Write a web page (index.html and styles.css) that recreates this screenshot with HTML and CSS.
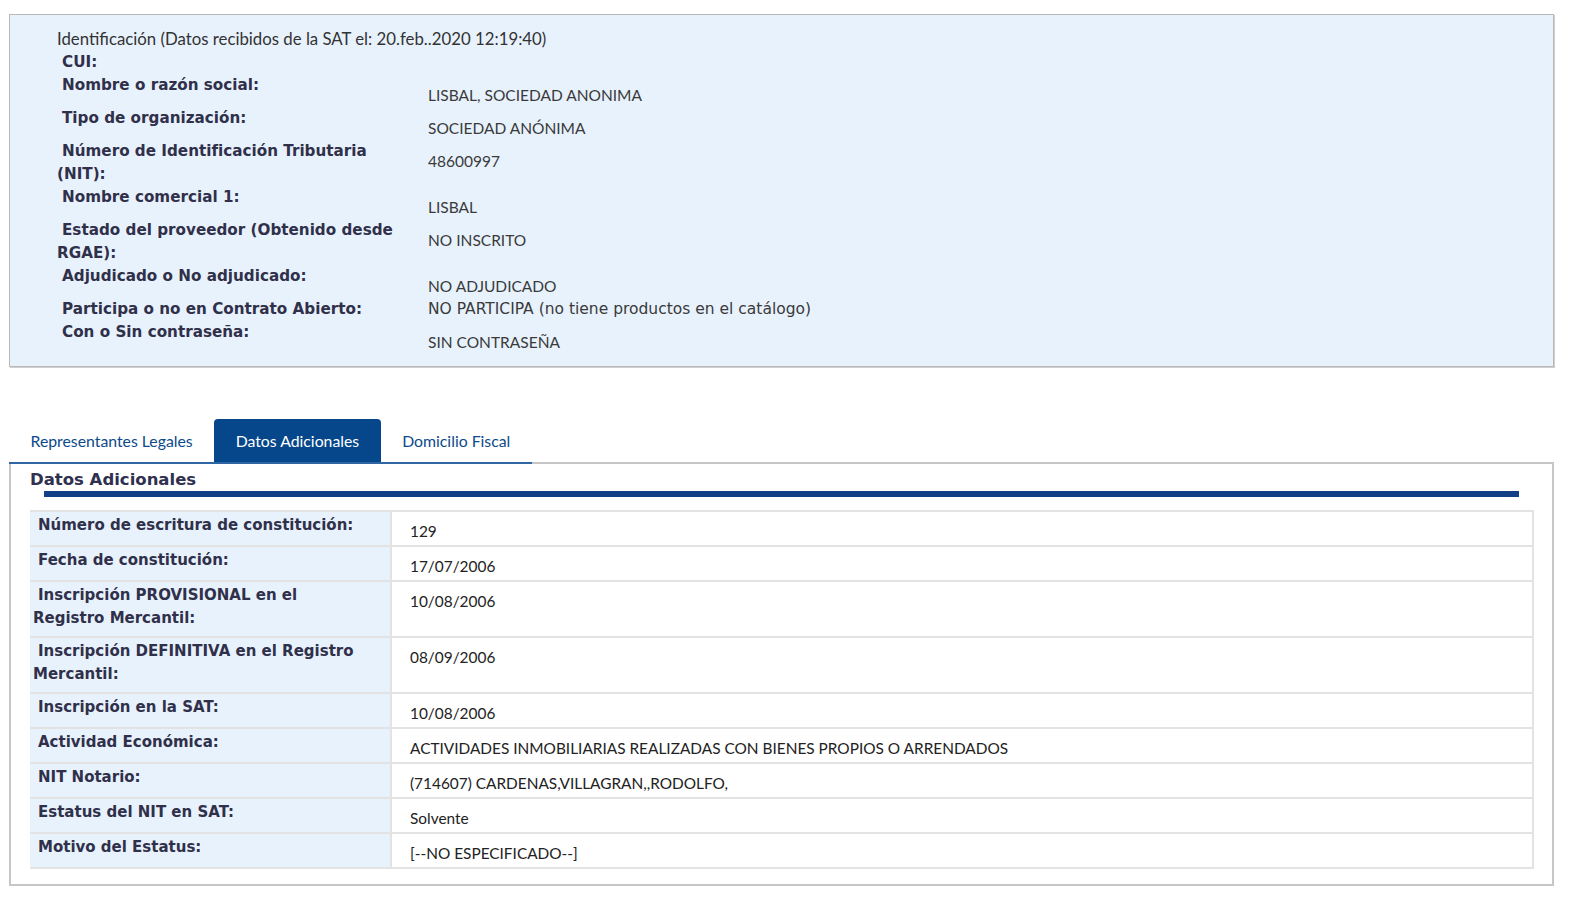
FILE: index.html
```html
<!DOCTYPE html>
<html lang="es">
<head>
<meta charset="utf-8">
<title>Identificación</title>
<link rel="stylesheet" href="styles.css">
</head>
<body>
<div class="page">
  <section class="ident">
    <div class="ident-title">Identificación (Datos recibidos de la SAT el: 20.feb..2020 12:19:40)</div>
    <div class="ident-grid">
      <div class="lbl"> CUI:</div><div class="val empty"></div>
      <div class="lbl"> Nombre o razón social:</div><div class="val">LISBAL, SOCIEDAD ANONIMA</div>
      <div class="lbl"> Tipo de organización:</div><div class="val">SOCIEDAD ANÓNIMA</div>
      <div class="lbl"> Número de Identificación Tributaria (NIT):</div><div class="val">48600997</div>
      <div class="lbl"> Nombre comercial 1:</div><div class="val">LISBAL</div>
      <div class="lbl"> Estado del proveedor (Obtenido desde RGAE):</div><div class="val">NO INSCRITO</div>
      <div class="lbl"> Adjudicado o No adjudicado:</div><div class="val">NO ADJUDICADO</div>
      <div class="lbl"> Participa o no en Contrato Abierto:</div><div class="val plain">NO PARTICIPA (no tiene productos en el catálogo)</div>
      <div class="lbl"> Con o Sin contraseña:</div><div class="val">SIN CONTRASEÑA</div>
    </div>
  </section>

  <nav class="tabs">
    <a class="tab">Representantes Legales</a>
    <a class="tab active">Datos Adicionales</a>
    <a class="tab">Domicilio Fiscal</a>
  </nav>
  <section class="panel">
    <h2 class="panel-title">Datos Adicionales</h2>
    <div class="panel-bar"></div>
    <table class="data">
      <tr><td class="tl">Número de escritura de constitución:</td><td class="tv">129</td></tr>
      <tr><td class="tl">Fecha de constitución:</td><td class="tv">17/07/2006</td></tr>
      <tr><td class="tl">Inscripción PROVISIONAL en el Registro Mercantil:</td><td class="tv">10/08/2006</td></tr>
      <tr><td class="tl">Inscripción DEFINITIVA en el Registro Mercantil:</td><td class="tv">08/09/2006</td></tr>
      <tr><td class="tl">Inscripción en la SAT:</td><td class="tv">10/08/2006</td></tr>
      <tr><td class="tl">Actividad Económica:</td><td class="tv">ACTIVIDADES INMOBILIARIAS REALIZADAS CON BIENES PROPIOS O ARRENDADOS</td></tr>
      <tr><td class="tl">NIT Notario:</td><td class="tv">(714607) CARDENAS,VILLAGRAN,,RODOLFO,</td></tr>
      <tr><td class="tl">Estatus del NIT en SAT:</td><td class="tv">Solvente</td></tr>
      <tr><td class="tl">Motivo del Estatus:</td><td class="tv">[--NO ESPECIFICADO--]</td></tr>
    </table>
  </section>
</div>
</body>
</html>
```

FILE: styles.css
```css
html, body {
  margin: 0;
  padding: 0;
  background: #ffffff;
}

.page {
  padding: 14px 38px 0 9px;
  font-family: Lato, "Open Sans", sans-serif;
  color: #333;
}

/* ---------- Identification box ---------- */
.ident {
  background: #e8f2fd;
  border: 1px solid #b9b9b9;
  box-shadow: 1px 1px 0 #cfcfcf;
  padding: 12px 0 12px 47px;
  height: 353px;
  box-sizing: border-box;
}

.ident-title {
  font-size: 16.8px;
  line-height: 24px;
  color: #333;
}

.ident-grid {
  display: grid;
  grid-template-columns: 371px 1fr;
}

.lbl {
  font-family: "DejaVu Sans", Verdana, sans-serif;
  font-weight: bold;
  font-size: 15.2px;
  line-height: 23px;
  color: #30304a;
  text-indent: 5px;
  padding-right: 20px;
}

.val {
  font-size: 15.5px;
  line-height: 23px;
  padding-top: 10px;
  color: #3a3a3a;
}

.val.empty { padding-top: 0; }

.val.plain {
  padding-top: 0;
  font-family: "DejaVu Sans", Verdana, sans-serif;
  font-size: 15.5px;
}

/* ---------- Tabs ---------- */
.tabs {
  display: flex;
  width: fit-content;
  margin-top: 52px;
  border-bottom: 2px solid #2f66a3;
  position: relative;
  z-index: 1;
  margin-bottom: -2px;
}

.tab {
  display: block;
  height: 43px;
  line-height: 43px;
  padding: 0 21.5px;
  font-size: 15.8px;
  color: #0c4a8a;
  border-radius: 4px 4px 0 0;
}

.tab.active {
  background: #05478a;
  color: #ffffff;
}

/* ---------- Panel ---------- */
.panel {
  border: 2px solid #c6c6c6;
  padding: 6px 18px 15px 19px;
}

.panel-title {
  margin: 0;
  font-family: "DejaVu Sans", Verdana, sans-serif;
  font-weight: bold;
  font-size: 16.5px;
  line-height: 20px;
  color: #30304f;
}

.panel-bar {
  height: 6px;
  background: #123f86;
  margin: 1px 15px 0 14px;
}

.data {
  margin-top: 13px;
  width: 100%;
  border-collapse: collapse;
}

.data td {
  vertical-align: top;
  border: 2px solid #e3e3e3;
}

.data td.tl {
  width: 327px;
  background: #e8f2fd;
  border-left-color: #e8f2fd;
  font-family: "DejaVu Sans", Verdana, sans-serif;
  font-weight: bold;
  font-size: 15px;
  line-height: 23px;
  color: #30304a;
  padding: 2px 30px 6px 1px;
  text-indent: 5px;
}

.data td.tv {
  font-size: 15.4px;
  line-height: 23px;
  color: #222;
  padding: 7.5px 18px 2.5px;
}
```
